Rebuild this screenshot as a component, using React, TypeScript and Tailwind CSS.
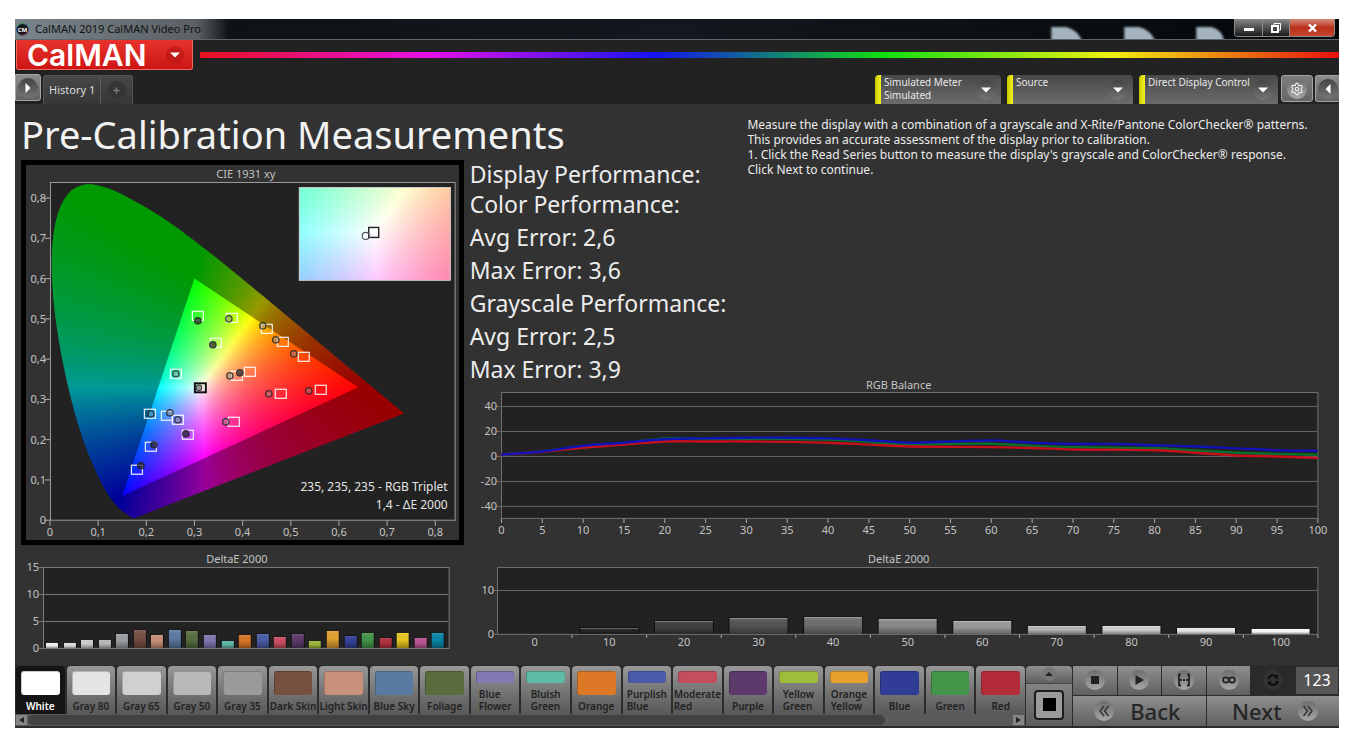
import React from "react";
import { Settings } from "lucide-react";

// --- CIE colour math ---
const xyToRgb = (x: number, y: number) => {
  const yy = Math.max(y, 0.001);
  const X = x / yy;
  const Z = (1 - x - yy) / yy;
  const rgb = [
    3.2406 * X - 1.5372 - 0.4986 * Z,
    -0.9689 * X + 1.8758 + 0.0415 * Z,
    0.0557 * X - 0.204 + 1.057 * Z,
  ].map((c) => Math.max(c, 0));
  const max = Math.max(...rgb);
  return `rgb(${rgb.map((c) => Math.round(Math.pow(c / max, 0.9) * 255)).join(",")})`;
};

const LOCUS = [
  [0.1741, 0.005], [0.1714, 0.0051], [0.1644, 0.0109], [0.1566, 0.0177],
  [0.144, 0.0297], [0.1241, 0.0578], [0.1096, 0.0868], [0.0913, 0.1327],
  [0.0687, 0.2007], [0.0454, 0.295], [0.0235, 0.4127], [0.0082, 0.5384],
  [0.0039, 0.6548], [0.0139, 0.7502], [0.0389, 0.812], [0.0743, 0.8338],
  [0.1142, 0.8262], [0.1547, 0.8059], [0.2296, 0.7543], [0.3016, 0.6923],
  [0.3731, 0.6245], [0.4441, 0.5547], [0.5125, 0.4866], [0.5752, 0.4242],
  [0.627, 0.3725], [0.6915, 0.3083], [0.7347, 0.2653],
];

const cx = (v: number) => 24 + v * 482;
const cy = (v: number) => 355.5 - v * 403;

const smoothPath = (pts: number[][]) => {
  let d = `M${pts[0][0]} ${pts[0][1]}`;
  for (let i = 0; i < pts.length - 1; i++) {
    const p0 = pts[i - 1] || pts[i];
    const p1 = pts[i];
    const p2 = pts[i + 1];
    const p3 = pts[i + 2] || p2;
    d += `C${p1[0] + (p2[0] - p0[0]) / 6} ${p1[1] + (p2[1] - p0[1]) / 6} ${
      p2[0] - (p3[0] - p1[0]) / 6
    } ${p2[1] - (p3[1] - p1[1]) / 6} ${p2[0]} ${p2[1]}`;
  }
  return d;
};

const locusPath = smoothPath(LOCUS.map(([x, y]) => [cx(x), cy(y)])) + "Z";
const gamutPath = `M${cx(0.64)} ${cy(0.33)}L${cx(0.3)} ${cy(0.6)}L${cx(0.15)} ${cy(0.06)}Z`;

// Fills a rectangle with chromaticity colours, one gradient per pixel row pair
const ColorField = ({
  id,
  x,
  y,
  width,
  height,
  toXy,
}: {
  id: string;
  x: number;
  y: number;
  width: number;
  height: number;
  toXy: (px: number, py: number) => [number, number];
}) => {
  const rows = Math.ceil(height / 2);
  const steps = 60;
  return (
    <g shapeRendering="crispEdges">
      {Array.from({ length: rows }, (_, r) => {
        const top = y + r * 2;
        return (
          <g key={r}>
            <linearGradient id={`${id}-${r}`}>
              {Array.from({ length: steps + 1 }, (_, s) => (
                <stop
                  key={s}
                  offset={s / steps}
                  stopColor={xyToRgb(...toXy(x + (width * s) / steps, top + 1))}
                />
              ))}
            </linearGradient>
            <rect
              x={x}
              y={top}
              width={width}
              height={Math.min(2, y + height - top)}
              fill={`url(#${id}-${r})`}
            />
          </g>
        );
      })}
    </g>
  );
};

const targets = [
  [172, 151], [206, 153], [190, 178], [241, 164], [257, 177], [278, 192],
  [224, 207], [211, 211], [255, 229], [295, 225], [208, 257], [150, 209],
  [124, 249], [141, 251], [152, 255], [162, 270], [125, 282], [111, 305],
];

const readings: [number, number, boolean?][] = [
  [172, 156, true], [203, 154], [187, 180, true], [237, 161], [250, 175],
  [268, 189], [214, 208, true], [204, 211], [243, 229], [283, 226],
  [200, 257], [150, 209], [125, 249], [144, 248], [152, 255],
  [160, 269, true], [128, 280, true], [115, 301, true],
];

const axisText = "fill-[#c4c4c4] text-[11px]";

function CieChart() {
  return (
    <svg viewBox="0 0 433 375" className="block w-full">
      <defs>
        <clipPath id="locus">
          <path d={locusPath} />
        </clipPath>
      </defs>
      <text x="220" y="13" textAnchor="middle" className={axisText}>
        CIE 1931 xy
      </text>
      <rect x="24.5" y="17.5" width="405" height="338" fill="#222222" />
      <g clipPath="url(#locus)">
        <ColorField
          id="cie"
          x={24}
          y={18}
          width={356}
          height={338}
          toXy={(px, py) => [(px - 24) / 482, (355.5 - py) / 403]}
        />
        <path
          d={`M0 0H433V375H0Z${gamutPath}`}
          fillRule="evenodd"
          fill="#000"
          opacity="0.4"
        />
      </g>
      <rect x="24.5" y="17.5" width="405" height="338" fill="none" stroke="#9a9a9a" />
      {[0, 1, 2, 3, 4, 5, 6, 7, 8].map((n) => (
        <g key={n}>
          <path
            d={`M19 ${cy(n / 10)}h5M${cx(n / 10)} 356v5`}
            stroke="#b0b0b0"
            fill="none"
          />
          <text x="20" y={cy(n / 10) + 4} textAnchor="end" className={axisText}>
            {n ? `0,${n}` : "0"}
          </text>
          <text x={cx(n / 10)} y="371" textAnchor="middle" className={axisText}>
            {n ? `0,${n}` : "0"}
          </text>
        </g>
      ))}

      {targets.map(([x, y], i) => (
        <rect
          key={i}
          x={x - 5.5}
          y={y - 4.5}
          width="11"
          height="9"
          fill="none"
          stroke="#fff"
          strokeOpacity="0.85"
          strokeWidth="1.3"
        />
      ))}
      {readings.map(([x, y, dark], i) => (
        <circle
          key={i}
          cx={x}
          cy={y}
          r="3.2"
          fill={dark ? "#222" : "#888"}
          fillOpacity={dark ? 0.7 : 0.45}
          stroke="#222"
          strokeOpacity="0.8"
          strokeWidth="1.3"
        />
      ))}
      <rect x="169" y="218.5" width="11" height="9" fill="none" stroke="#111" strokeWidth="2" />
      <rect x="171.5" y="220.5" width="7" height="5" fill="none" stroke="#ddd" />
      <circle cx="173" cy="223" r="3" fill="#999" stroke="#222" />

      {/* White point magnifier */}
      <ColorField
        id="inset"
        x={273}
        y={22}
        width={152}
        height={93}
        toXy={(px, py) => [0.3127 + (px - 349) / 2100, 0.329 - (py - 67) / 1760]}
      />
      <rect x="273.5" y="22.5" width="151" height="93" fill="none" stroke="#c8c8c8" />
      <rect x="343" y="62.5" width="10" height="10" fill="none" stroke="#222" strokeWidth="1.4" />
      <circle cx="340" cy="71" r="3.5" fill="none" stroke="#555" strokeWidth="1.2" />

      <text x="422" y="326" textAnchor="end" className="fill-[#e4e4e4] text-[12px]">
        235, 235, 235 - RGB Triplet
      </text>
      <text x="422" y="344" textAnchor="end" className="fill-[#e4e4e4] text-[12px]">
        1,4 - ΔE 2000
      </text>
    </svg>
  );
}

const red = [1.5, 3.8, 7, 9.5, 12, 12, 12, 11.7, 11, 9.5, 8, 7.7, 7.5, 6.8, 5.6, 5.3, 5, 3, 0.8, 0, -1.3];
const green = [1.5, 4, 8, 10.5, 14.5, 14, 14, 14, 13.5, 11.5, 9.5, 10, 10.2, 8.5, 7.5, 7, 6.5, 4.8, 3, 2, 1.3];
const blue = [1.5, 4, 8.5, 11, 13.8, 14.5, 15, 15, 14.5, 13, 11, 12, 12.8, 11, 10, 10, 9, 8, 6.5, 5, 4.5];

function RgbBalance() {
  const px = (i: number) => 34.5 + i * 40.85;
  const py = (v: number) => 76.5 - v * 1.25;
  const line = (data: number[]) => smoothPath(data.map((v, i) => [px(i), py(v)]));
  return (
    <svg viewBox="0 0 873 165" className="block w-full overflow-visible">
      <text x="432" y="9" textAnchor="middle" className={axisText}>
        RGB Balance
      </text>
      <rect x="34.5" y="12.5" width="817" height="126" fill="#222222" stroke="#707070" />
      {[40, 20, 0, -20, -40].map((v) => (
        <g key={v}>
          <path d={`M30 ${Math.floor(py(v)) + 0.5}H851`} stroke="#666666" />
          <text x="30" y={py(v) + 4} textAnchor="end" className={axisText}>
            {v}
          </text>
        </g>
      ))}
      {red.map((_, i) => (
        <g key={i}>
          <path d={`M${px(i)} 139v4`} stroke="#b0b0b0" />
          <text x={px(i)} y="154" textAnchor="middle" className={axisText}>
            {i * 5}
          </text>
        </g>
      ))}
      <g fill="none" strokeWidth="2.4">
        <path d={line(green)} stroke="#08702c" />
        <path d={line(red)} stroke="#c8101c" />
        <path d={line(blue)} stroke="#1212b8" />
      </g>
    </svg>
  );
}

const colorBars: [string, number][] = [
  ["#f5f5f5", 5], ["#e0e0e0", 5], ["#cfcfcf", 8], ["#b9b9b9", 8], ["#9c9fa1", 14],
  ["#774f43", 18], ["#c99078", 13], ["#5d7ba5", 18], ["#5a6f42", 17], ["#8079b0", 13],
  ["#5fb8a8", 7], ["#d87626", 13], ["#4b5da8", 14], ["#cb4e5f", 11], ["#5e3a6b", 14],
  ["#9fb83c", 7], ["#e2a030", 17], ["#34419a", 12], ["#43964a", 15], ["#b03040", 10],
  ["#e8c820", 15], ["#bb5495", 10], ["#0a86a8", 15],
];

function ColorDeltaE() {
  return (
    <svg viewBox="0 0 452 120" className="block w-full">
      <defs>
        <linearGradient id="shade" x2="0" y2="1">
          <stop offset="0" stopColor="#fff" stopOpacity="0.12" />
          <stop offset="0.45" stopColor="#000" stopOpacity="0" />
          <stop offset="1" stopColor="#000" stopOpacity="0.35" />
        </linearGradient>
      </defs>
      <text x="222" y="18" textAnchor="middle" className={axisText}>
        DeltaE 2000
      </text>
      <rect x="28.5" y="22.5" width="406" height="81" fill="#222222" stroke="#7c7c7c" />
      {[15, 10, 5, 0].map((v) => {
        const y = 103.5 - Math.round(v * 5.4);
        return (
          <g key={v}>
            <path d={`M24 ${y}H434`} stroke="#777777" />
            <text x="24" y={y + 4} textAnchor="end" className={axisText}>
              {v}
            </text>
          </g>
        );
      })}
      {colorBars.map(([color, h], i) => {
        const x = Math.round(31 + i * 17.56);
        return (
          <g key={i}>
            <rect x={x - 1} y={102 - h} width="14" height={h + 1} fill="#151515" />
            <rect x={x} y={103 - h} width="12" height={h} fill={color} />
            <rect x={x} y={103 - h} width="12" height={h} fill="url(#shade)" />
          </g>
        );
      })}
    </svg>
  );
}

const grayBars: [string, number][] = [
  ["#222222", 0], ["#262626", 6], ["#3f3f3f", 13], ["#555555", 16], ["#6f6f6f", 17],
  ["#8a8a8a", 15], ["#9a9a9a", 13], ["#b4b4b4", 8], ["#cfcfcf", 8], ["#e8e8e8", 6],
  ["#ffffff", 5],
];

function GrayDeltaE() {
  return (
    <svg viewBox="0 0 873 120" className="block w-full">
      <text x="432" y="18" textAnchor="middle" className={axisText}>
        DeltaE 2000
      </text>
      <rect x="30.5" y="22.5" width="821" height="67" fill="#222222" stroke="#707070" />
      {[10, 0].map((v) => {
        const y = 89.5 - Math.round(v * 4.4);
        return (
          <g key={v}>
            <path d={`M27 ${y}H851`} stroke="#6c6c6c" />
            <text x="27" y={y + 4} textAnchor="end" className={axisText}>
              {v}
            </text>
          </g>
        );
      })}
      {grayBars.map(([color, h], i) => {
        const mid = 30.5 + (i + 0.5) * 74.64;
        return (
          <g key={i}>
            <path d={`M${mid + 37.3} 90v3`} stroke="#b0b0b0" />
            {h > 0 && (
              <>
                <rect x={mid - 30} y={88 - h} width="60" height={h + 1} fill="#101010" />
                <rect x={mid - 29} y={89 - h} width="58" height={h} fill={color} />
                <rect x={mid - 29} y={89 - h} width="58" height="1" fill="#fff" opacity="0.25" />
                <rect x={mid - 29} y={89 - h} width="58" height={h} fill="url(#shade)" />
              </>
            )}
            <text x={mid} y="101" textAnchor="middle" className={axisText}>
              {i * 10}
            </text>
          </g>
        );
      })}
    </svg>
  );
}

// --- Small round button face used all over the toolbar ---
const Knob = ({
  dark = false,
  children,
}: {
  dark?: boolean;
  children: React.ReactNode;
}) => (
  <span
    className={`flex h-5 w-5 shrink-0 items-center justify-center rounded-full bg-linear-to-b ${
      dark ? "from-[#444444] to-[#767676]" : "from-[#6c6c6c] to-[#a8a8a8]"
    }`}
  >
    {children}
  </span>
);

const DownArrow = () => (
  <svg width="10" height="6" viewBox="0 0 10 6">
    <path d="M0 0.5H10L5 5.5Z" fill="#fff" />
  </svg>
);

const DeviceButton = ({
  title,
  detail,
  width,
}: {
  title: string;
  detail?: string;
  width: string;
}) => (
  <button
    type="button"
    className={`${width} flex h-[29px] items-stretch overflow-hidden rounded-t bg-linear-to-b from-[#484848] to-[#6c6c6c] text-left`}
  >
    <span className="w-[6px] bg-linear-to-r from-[#c8c800] to-[#f4f41c]" />
    <span className="flex-1 pt-px pl-[3px] text-[10px] leading-[13px] whitespace-nowrap text-[#e8e8e8]">
      {title}
      <br />
      {detail}
    </span>
    <span className="flex items-center pt-px pr-[5px]">
      <Knob dark>
        <DownArrow />
      </Knob>
    </span>
  </button>
);

const patterns = [
  { name: ["White"], color: "#ffffff" },
  { name: ["Gray 80"], color: "#e4e4e4" },
  { name: ["Gray 65"], color: "#d0d0d0" },
  { name: ["Gray 50"], color: "#b9b9b9" },
  { name: ["Gray 35"], color: "#9b9b9b" },
  { name: ["Dark Skin"], color: "#775040" },
  { name: ["Light Skin"], color: "#c8917a" },
  { name: ["Blue Sky"], color: "#5a7aa4" },
  { name: ["Foliage"], color: "#586c3c" },
  { name: ["Blue", "Flower"], color: "#8079b2" },
  { name: ["Bluish", "Green"], color: "#5cbba6" },
  { name: ["Orange"], color: "#dc7826" },
  { name: ["Purplish", "Blue"], color: "#4b5baa" },
  { name: ["Moderate", "Red"], color: "#c54e5e" },
  { name: ["Purple"], color: "#5c3a6c" },
  { name: ["Yellow", "Green"], color: "#9fbc3c" },
  { name: ["Orange", "Yellow"], color: "#e6a02c" },
  { name: ["Blue"], color: "#303c96" },
  { name: ["Green"], color: "#44944a" },
  { name: ["Red"], color: "#b42c3a" },
];

function PatternStrip() {
  return (
    <div className="min-w-0 flex-1">
      <div className="flex gap-[2px] pl-px">
        {patterns.map((p, i) => (
          <button
            key={i}
            type="button"
            className={`flex h-12 min-w-0 flex-1 flex-col items-center justify-between rounded-t px-[5px] pt-[5px] pb-[2px] ${
              i === 0
                ? "bg-[#151515] text-white"
                : "bg-linear-to-b from-[#989898] to-[#585858] text-[#222222]"
            }`}
          >
            <span
              className={`w-full rounded-[3px] border-t border-l border-black/20 ${
                p.name.length > 1 ? "h-3" : "h-6"
              }`}
              style={{ backgroundColor: p.color }}
            />
            <span className="text-left text-[10px] leading-[12px] font-semibold whitespace-nowrap">
              {p.name.map((word) => (
                <span key={word} className="block">
                  {word}
                </span>
              ))}
            </span>
          </button>
        ))}
      </div>
      {/* Scrollbar */}
      <div className="flex h-3 items-center bg-[#5a5a5a] px-px">
        <button type="button" aria-label="Scroll left" className="flex h-[10px] w-[11px] items-center justify-center bg-[#858585]">
          <svg width="5" height="6" viewBox="0 0 5 6">
            <path d="M5 0V6L0 3Z" fill="#222" />
          </svg>
        </button>
        <div className="ml-px flex-1">
          <div className="h-[10px] w-[87%] rounded-full bg-[#424242]" />
        </div>
        <button type="button" aria-label="Scroll right" className="flex h-[10px] w-[11px] items-center justify-center bg-[#858585]">
          <svg width="5" height="6" viewBox="0 0 5 6">
            <path d="M0 0V6L5 3Z" fill="#222" />
          </svg>
        </button>
      </div>
    </div>
  );
}

const transport = [
  { label: "Stop", icon: <rect x="3" y="3" width="8" height="8" fill="#222" /> },
  { label: "Play", icon: <path d="M3.5 2L12 7L3.5 12Z" fill="#222" /> },
  {
    label: "Read series",
    icon: (
      <g stroke="#222" strokeWidth="1.8" fill="none">
        <path d="M4 1.5H2V12.5H4M10 1.5H12V12.5H10" />
        <path d="M3 7h8" strokeDasharray="2 1" />
      </g>
    ),
  },
  {
    label: "Read continuous",
    icon: (
      <g stroke="#222" strokeWidth="1.6" fill="none">
        <ellipse cx="3.9" cy="7" rx="2.9" ry="2.6" />
        <ellipse cx="10.1" cy="7" rx="2.9" ry="2.6" />
      </g>
    ),
  },
];

const barButton = "flex items-center bg-linear-to-b from-[#8f8f8f] to-[#606060]";

function Footer() {
  return (
    <footer className="flex bg-[#2c2c2c] pt-px pb-[2px]">
      <PatternStrip />
      <div className="ml-px flex w-[46px] flex-col">
        <button type="button" aria-label="Expand" className={`${barButton} h-[18px] justify-center rounded-t border-b border-[#4a4a4a]`}>
          <span className="flex h-[14px] w-[14px] items-center justify-center rounded-full bg-[#777777]">
            <svg width="8" height="4" viewBox="0 0 8 4">
              <path d="M0 4L4 0L8 4Z" fill="#222" />
            </svg>
          </span>
        </button>
        <button type="button" aria-label="Pattern window" className="flex flex-1 items-center justify-center bg-linear-to-b from-[#848484] to-[#5c5c5c]">
          <span className="flex h-[30px] w-[30px] items-center justify-center rounded-[4px] border-2 border-[#1c1c1c] bg-[#9a9a9a]">
            <span className="h-[13px] w-[13px] bg-black" />
          </span>
        </button>
      </div>
      <div className="ml-px flex w-[266px] flex-col gap-px">
        <div className="flex h-[29px] gap-px">
          {transport.map((t) => (
            <button key={t.label} type="button" aria-label={t.label} className={`${barButton} flex-1 justify-center`}>
              <Knob>
                <svg width="14" height="14" viewBox="0 0 14 14">
                  {t.icon}
                </svg>
              </Knob>
            </button>
          ))}
          <button type="button" aria-label="Refresh" className="flex flex-1 items-center justify-center bg-[#2a2a2a]">
            <span className="flex h-5 w-5 items-center justify-center rounded-full bg-[#333333]">
              <svg width="14" height="14" viewBox="0 0 14 14" fill="none" stroke="#0c0c0c" strokeWidth="2">
                <path d="M2.5 6A4.5 4.5 0 0 1 10.5 4M11.5 8A4.5 4.5 0 0 1 3.5 10" />
                <path d="M12 1V5.5H8ZM2 13V8.5H6Z" fill="#0c0c0c" stroke="none" />
              </svg>
            </span>
          </button>
          <div className="my-px mr-px flex w-[42px] items-center justify-center bg-[#555555] text-base text-white">
            123
          </div>
        </div>
        <div className="flex flex-1 gap-px text-[22px] leading-none font-medium text-[#262626]">
          <button type="button" className={`${barButton} flex-1 justify-center gap-4 pr-1`}>
            <Knob>
              <svg width="12" height="12" viewBox="0 0 12 12" fill="none" stroke="#333" strokeWidth="1.5">
                <path d="M6 1L2 6L6 11M10.5 1L6.5 6L10.5 11" />
              </svg>
            </Knob>
            Back
          </button>
          <button type="button" className={`${barButton} flex-1 justify-center gap-4 pl-1`}>
            Next
            <Knob>
              <svg width="12" height="12" viewBox="0 0 12 12" fill="none" stroke="#333" strokeWidth="1.5">
                <path d="M1.5 1L5.5 6L1.5 11M6 1L10 6L6 11" />
              </svg>
            </Knob>
          </button>
        </div>
      </div>
    </footer>
  );
}

function TitleBar() {
  return (
    <div className="relative flex h-[21px] items-start justify-between border-b border-[#5e666c] bg-linear-to-r from-[#0b1014] via-[#12181d] to-[#05080b]">
      <svg className="absolute inset-0 h-5 w-full" aria-hidden="true">
        <defs>
          <linearGradient id="glow">
            <stop offset="0" stopColor="#7a858c" />
            <stop offset="0.85" stopColor="#5b6064" />
            <stop offset="1" stopColor="#5b6064" stopOpacity="0" />
          </linearGradient>
          <filter id="soft">
            <feGaussianBlur stdDeviation="1.2" />
          </filter>
        </defs>
        <rect width="214" height="20" fill="url(#glow)" />
        <svg x="78.5%" width="190" height="20" overflow="visible">
          <g fill="#b4c6d2" opacity="0.9" filter="url(#soft)">
            <path d="M-3 22V8H12Q22 10 28 22Z" />
            <path d="M70 22V8H85Q95 10 101 22Z" />
            <path d="M142 22V8H157Q167 10 170 22Z" />
          </g>
        </svg>
      </svg>
      <div className="relative flex h-5 items-center gap-[6px] pl-px text-[11px] text-[#101314]">
        <svg width="13" height="13" viewBox="0 0 13 13">
          <circle cx="6.5" cy="6.5" r="6" fill="#161616" stroke="#2c5a8c" />
          <path d="M1 4A6 6 0 0 1 9 1" stroke="#3c9a4a" fill="none" />
          <path d="M12 8A6 6 0 0 1 5 12" stroke="#b02a5c" fill="none" />
          <text x="6.5" y="9" textAnchor="middle" className="fill-white text-[6px] font-bold">
            CM
          </text>
        </svg>
        CalMAN 2019 CalMAN Video Pro
      </div>
      <div className="relative mr-1 flex h-[18px] overflow-hidden rounded-b border border-t-0 border-[#8a8a8a]">
        <button type="button" aria-label="Minimize" className="flex w-[28px] items-end justify-center border-r border-[#8a8a8a] bg-linear-to-b from-[#8a8a8a] to-[#1c1c1c] pb-[5px]">
          <span className="h-[3px] w-[10px] bg-white" />
        </button>
        <button type="button" aria-label="Restore" className="flex w-[27px] items-center justify-center border-r border-[#8a8a8a] bg-linear-to-b from-[#8a8a8a] to-[#1c1c1c]">
          <svg width="10" height="10" viewBox="0 0 10 10" fill="none" stroke="#fff">
            <path d="M3 2V0.5H9.5V7H8" />
            <rect x="1" y="3" width="6" height="6" strokeWidth="2" />
          </svg>
        </button>
        <button type="button" aria-label="Close" className="flex w-[44px] items-center justify-center bg-linear-to-b from-[#d98a78] via-[#b8301a] to-[#c8452c]">
          <svg width="9" height="8" viewBox="0 0 9 8" stroke="#fff" strokeWidth="2.4">
            <path d="M1 0.5L8 7.5M8 0.5L1 7.5" />
          </svg>
        </button>
      </div>
    </div>
  );
}

function App() {
  return (
    <div className="min-h-screen bg-white px-[15px] pt-[19px] pb-[14px] font-['Noto_Sans',sans-serif]">
      <div className="overflow-hidden bg-[#323232]">
        <TitleBar />

        {/* Logo and spectrum */}
        <header className="bg-[#222222]">
          <div className="flex items-start gap-[7px]">
            <button type="button" className="ml-px flex h-[30px] w-[177px] items-center justify-between rounded-b-[3px] border border-t-0 border-[#f06a60] bg-linear-to-b from-[#e8322c] to-[#cc1414] pr-2 pl-[10px] font-['Inter',sans-serif] text-[30px] leading-none font-semibold text-white">
              CalMAN
              <span className="flex h-[18px] w-[18px] items-center justify-center rounded-full bg-[#c41a18]">
                <DownArrow />
              </span>
            </button>
            <div className="mt-[12px] h-[6px] flex-1 bg-[linear-gradient(to_right,#e8101c,#e810e8_20%,#1414f0_40%,#10e010_60%,#f0f010_80%,#e81010)]" />
          </div>

          {/* Tabs */}
          <div className="flex h-[34px] items-end">
            <button type="button" aria-label="Open panel" className="mb-[3px] flex h-[27px] w-[26px] items-center justify-center rounded-r-[3px] border border-[#a4a4a4] bg-linear-to-b from-[#8c8c8c] to-[#626262]">
              <Knob dark>
                <svg width="6" height="10" viewBox="0 0 6 10">
                  <path d="M0.5 0V10L5.5 5Z" fill="#fff" />
                </svg>
              </Knob>
            </button>
            <div className="ml-[2px] flex h-[29px] rounded-t-[3px] border border-b-0 border-[#545454] bg-linear-to-b from-[#474747] to-[#363636]">
              <button type="button" className="border-r border-[#5c5c5c] px-[5px] text-[11px] text-[#dddddd]">
                History 1
              </button>
              <button type="button" aria-label="Add tab" className="flex w-[31px] items-center justify-center">
                <span className="flex h-[18px] w-[18px] items-center justify-center rounded-full bg-[#353535]">
                  <svg width="7" height="7" viewBox="0 0 7 7" stroke="#7c7c7c" strokeWidth="1.5">
                    <path d="M3.5 0.5V6.5M0.5 3.5H6.5" />
                  </svg>
                </span>
              </button>
            </div>
            <div className="ml-auto flex gap-[6px]">
              <DeviceButton title="Simulated Meter" detail="Simulated" width="w-[126px]" />
              <DeviceButton title="Source" width="w-[126px]" />
              <DeviceButton title="Direct Display Control" width="w-[139px]" />
            </div>
            <button type="button" aria-label="Settings" className="mb-[2px] ml-[3px] flex h-[27px] w-[32px] items-center justify-center rounded-[3px] border border-[#a4a4a4] bg-linear-to-b from-[#7c7c7c] to-[#666666]">
              <Knob>
                <Settings size={14} color="#eeeeee" strokeWidth={2} />
              </Knob>
            </button>
            <button type="button" aria-label="Collapse panel" className="mb-[2px] ml-[2px] flex h-[27px] w-[24px] items-center justify-center rounded-l-[3px] border border-r-0 border-[#a4a4a4] bg-linear-to-b from-[#8c8c8c] to-[#626262]">
              <Knob dark>
                <svg width="6" height="10" viewBox="0 0 6 10">
                  <path d="M5.5 0V10L0.5 5Z" fill="#fff" />
                </svg>
              </Knob>
            </button>
          </div>
        </header>

        <main className="grid grid-cols-[452fr_277fr_596fr]">
          <h1 className="col-span-2 flex h-[56px] items-center pt-1 pl-[6px] text-[38px] leading-none whitespace-nowrap text-[#f2f2f2]">
            Pre-Calibration Measurements
          </h1>
          <div className="row-span-2 pt-[13px] pl-1 text-[12px] leading-[15px] text-[#ececec]">
            <p>
              Measure the display with a combination of a grayscale and
              X-Rite/Pantone ColorChecker® patterns.
            </p>
            <p>
              This provides an accurate assessment of the display prior to
              calibration.
            </p>
            <p>
              1. Click the Read Series button to measure the display's grayscale
              and ColorChecker® response.
            </p>
            <p>Click Next to continue.</p>
          </div>
          <div className="row-span-2 pr-[3px] pl-[6px]">
            <div className="border-[5px] border-black">
              <CieChart />
            </div>
          </div>
          <div className="h-[220px] pl-[3px] text-[23px] leading-[33px] whitespace-nowrap text-[#ececec]">
            <p className="leading-[28px]">Display Performance:</p>
            <p>Color Performance:</p>
            <p>Avg Error: 2,6</p>
            <p>Max Error: 3,6</p>
            <p>Grayscale Performance:</p>
            <p>Avg Error: 2,5</p>
            <p>Max Error: 3,9</p>
          </div>
          <div className="col-span-2">
            <RgbBalance />
          </div>
          <ColorDeltaE />
          <div className="col-span-2">
            <GrayDeltaE />
          </div>
        </main>

        <Footer />
      </div>
    </div>
  );
}

export default App;
